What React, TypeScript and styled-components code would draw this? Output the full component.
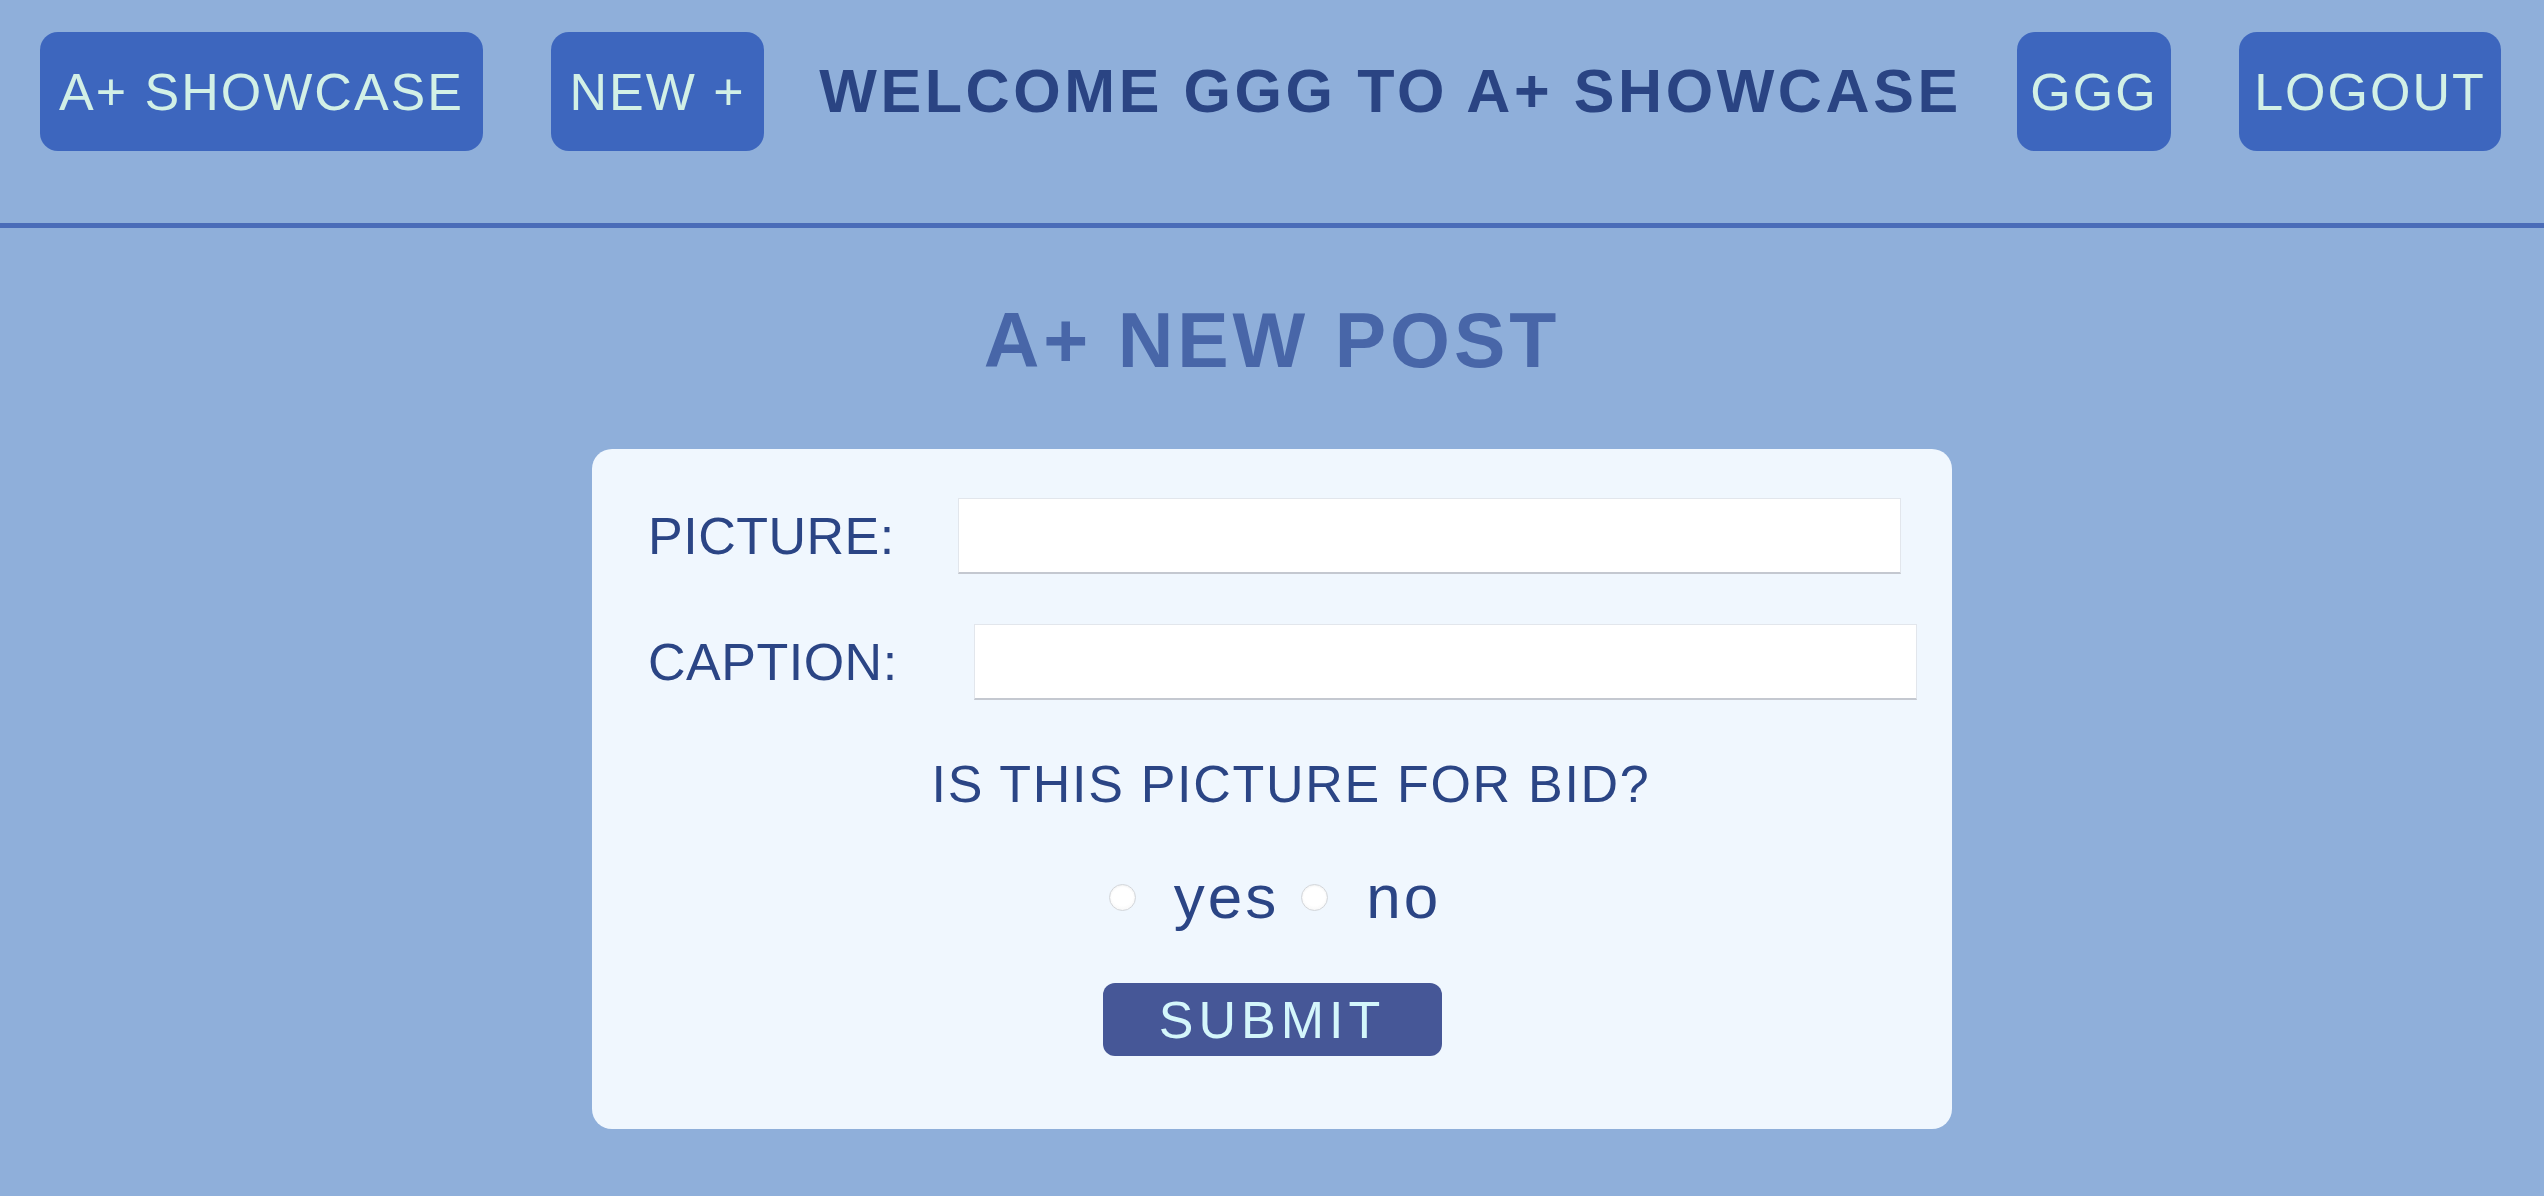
import React from "react";
import styled, { createGlobalStyle } from "styled-components";

const GlobalStyle = createGlobalStyle`
  html, body {
    margin: 0;
    padding: 0;
    background: #8fafda;
  }
  body {
    font-family: "Liberation Sans", Arial, sans-serif;
    min-height: 1196px;
  }
  * { box-sizing: border-box; }
`;

const Page = styled.div`
  width: 100%;
  min-height: 1196px;
  background: #8fafda;
`;

const Nav = styled.nav`
  display: flex;
  align-items: flex-start;
  gap: 54px;
  height: 228px;
  padding: 32px 43px 0 40px;
  border-bottom: 5px solid #4a6cb8;
`;

const NavGroup = styled.div`
  display: flex;
  flex: none;
  gap: 68px;
`;

const NavButton = styled.button<{ $w: number }>`
  flex: none;
  width: ${(p) => p.$w}px;
  height: 119px;
  border: none;
  border-radius: 18px;
  background: #3d66be;
  color: #d2f0e6;
  font-family: "Liberation Sans", Arial, sans-serif;
  font-size: 52px;
  letter-spacing: 2px;
  line-height: 1;
  padding: 0;
  cursor: pointer;
`;

const Welcome = styled.h1`
  flex: 1;
  min-width: 0;
  margin: 0;
  text-align: center;
  font-size: 61px;
  font-weight: 700;
  letter-spacing: 3.6px;
  line-height: 119px;
  color: #2a4483;
  white-space: nowrap;
`;

const Main = styled.main`
  display: flex;
  flex-direction: column;
  align-items: center;
  padding-top: 74px;
`;

const Title = styled.h2`
  margin: 0 0 70px;
  font-size: 77px;
  font-weight: 700;
  letter-spacing: 4px;
  line-height: 1;
  color: #4866a8;
`;

const Card = styled.form`
  width: 1360px;
  height: 680px;
  background: #f0f7fe;
  border-radius: 20px;
  padding: 49px 56px 0 56px;
  display: flex;
  flex-direction: column;
  align-items: stretch;
`;

const FieldRow = styled.div<{ $mt?: number }>`
  display: flex;
  align-items: center;
  height: 76px;
  margin-top: ${(p) => p.$mt ?? 0}px;
`;

const Label = styled.label`
  font-size: 52px;
  line-height: 1;
  letter-spacing: 0.5px;
  color: #2b4585;
  white-space: nowrap;
  flex: none;
`;

const TextInput = styled.input<{ $ml: number }>`
  flex: none;
  width: 943px;
  height: 76px;
  margin-left: ${(p) => p.$ml}px;
  background: #ffffff;
  border: 1px solid #e2e6ec;
  border-bottom: 2px solid #c4c8d0;
  outline: none;
  font-size: 32px;
  padding: 0 12px;
`;

const Question = styled.p`
  margin: 58px 0 0;
  padding-left: 38px;
  text-align: center;
  font-size: 52px;
  line-height: 1;
  color: #2b4585;
  letter-spacing: 1.7px;
`;

const RadioRow = styled.div`
  display: flex;
  align-items: center;
  justify-content: center;
  margin-top: 57px;
  padding-left: 6px;
  height: 60px;
`;

const Radio = styled.input`
  appearance: none;
  -webkit-appearance: none;
  flex: none;
  width: 27px;
  height: 27px;
  margin: 0;
  border-radius: 50%;
  border: 1px solid #d3d6da;
  background: radial-gradient(circle at 50% 40%, #ffffff 55%, #f1f1f1 100%);
  box-shadow: inset 0 1px 2px rgba(0, 0, 0, 0.06);
`;

const RadioText = styled.label<{ $mr?: number }>`
  margin-left: 38px;
  margin-right: ${(p) => p.$mr ?? 0}px;
  font-size: 62px;
  letter-spacing: 3px;
  line-height: 1;
  color: #2b4585;
`;

const SubmitRow = styled.div`
  display: flex;
  justify-content: center;
  margin-top: 56px;
`;

const Submit = styled.button`
  width: 339px;
  height: 73px;
  border: none;
  border-radius: 12px;
  background: #465797;
  color: #d4f6fb;
  font-family: "Liberation Sans", Arial, sans-serif;
  font-size: 52px;
  letter-spacing: 5px;
  line-height: 1;
  padding: 0;
  cursor: pointer;
`;

export default function App() {
  return (
    <Page>
      <GlobalStyle />
      <Nav>
        <NavGroup>
          <NavButton $w={443}>A+ SHOWCASE</NavButton>
          <NavButton $w={213}>NEW +</NavButton>
        </NavGroup>
        <Welcome>WELCOME GGG TO A+ SHOWCASE</Welcome>
        <NavGroup>
          <NavButton $w={154}>GGG</NavButton>
          <NavButton $w={262}>LOGOUT</NavButton>
        </NavGroup>
      </Nav>
      <Main>
        <Title>A+ NEW POST</Title>
        <Card onSubmit={(e) => e.preventDefault()}>
          <FieldRow>
            <Label htmlFor="picture">PICTURE:</Label>
            <TextInput id="picture" type="text" $ml={63} />
          </FieldRow>
          <FieldRow $mt={50}>
            <Label htmlFor="caption">CAPTION:</Label>
            <TextInput id="caption" type="text" $ml={76} />
          </FieldRow>
          <Question>IS THIS PICTURE FOR BID?</Question>
          <RadioRow>
            <Radio type="radio" name="bid" id="yes" />
            <RadioText htmlFor="yes" $mr={22}>yes</RadioText>
            <Radio type="radio" name="bid" id="no" />
            <RadioText htmlFor="no">no</RadioText>
          </RadioRow>
          <SubmitRow>
            <Submit type="submit">SUBMIT</Submit>
          </SubmitRow>
        </Card>
      </Main>
    </Page>
  );
}
